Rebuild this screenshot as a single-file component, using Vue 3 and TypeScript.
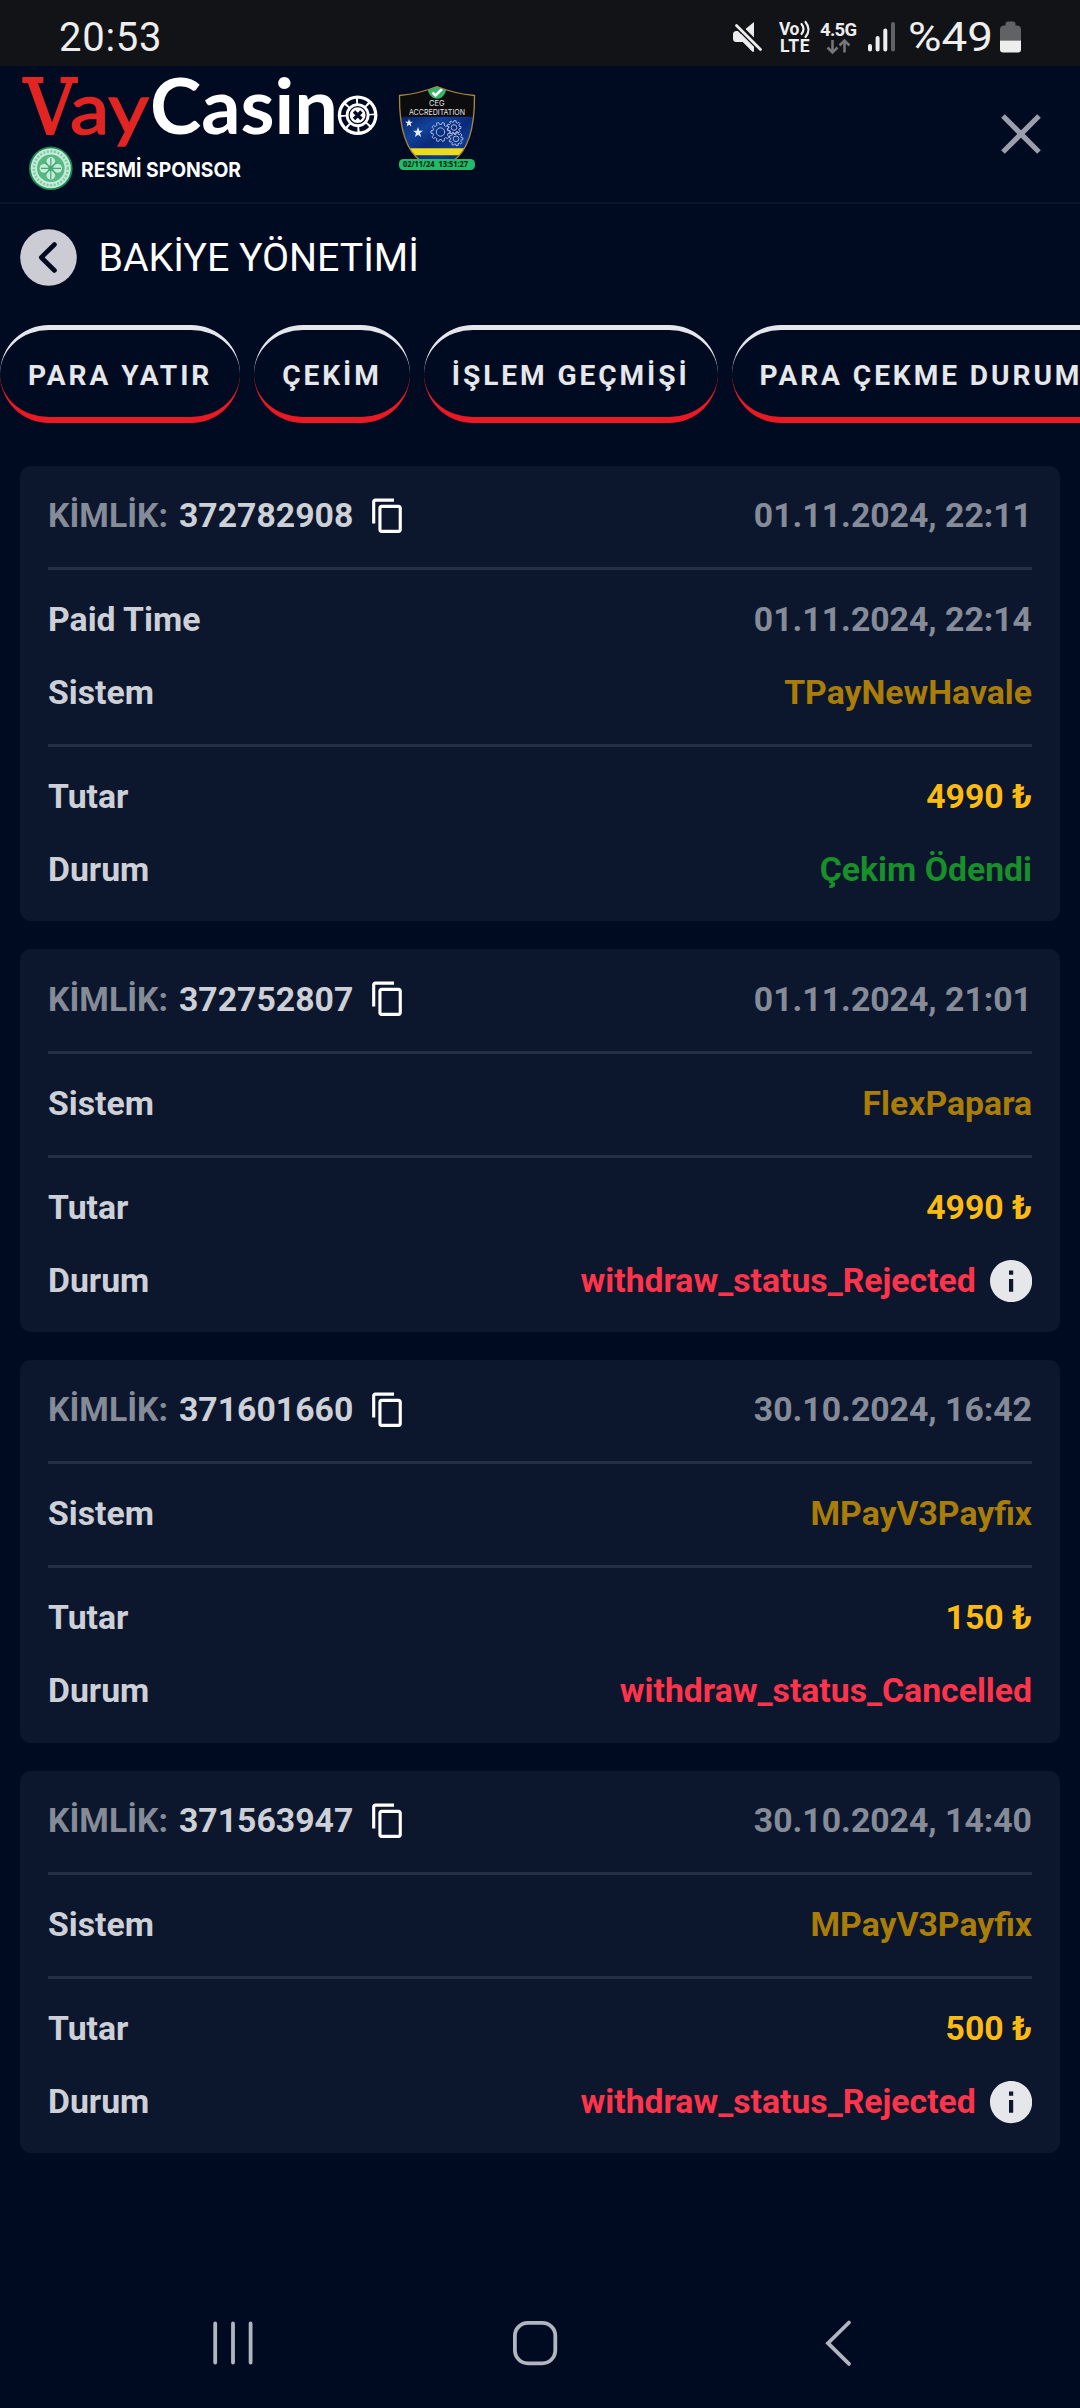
<script setup lang="ts">
type Tone = 'muted' | 'system' | 'amount' | 'paid' | 'failed'

interface Row {
  label: string
  value: string
  tone: Tone
  info?: boolean
}

interface Transaction {
  id: string
  date: string
  details: Row[]
  summary: Row[]
}

const tabs: string[] = ['PARA YATIR', 'ÇEKİM', 'İŞLEM GEÇMİŞİ', 'PARA ÇEKME DURUMU']

const transactions: Transaction[] = [
  {
    id: '372782908',
    date: '01.11.2024, 22:11',
    details: [
      { label: 'Paid Time', value: '01.11.2024, 22:14', tone: 'muted' },
      { label: 'Sistem', value: 'TPayNewHavale', tone: 'system' },
    ],
    summary: [
      { label: 'Tutar', value: '4990 ₺', tone: 'amount' },
      { label: 'Durum', value: 'Çekim Ödendi', tone: 'paid' },
    ],
  },
  {
    id: '372752807',
    date: '01.11.2024, 21:01',
    details: [{ label: 'Sistem', value: 'FlexPapara', tone: 'system' }],
    summary: [
      { label: 'Tutar', value: '4990 ₺', tone: 'amount' },
      { label: 'Durum', value: 'withdraw_status_Rejected', tone: 'failed', info: true },
    ],
  },
  {
    id: '371601660',
    date: '30.10.2024, 16:42',
    details: [{ label: 'Sistem', value: 'MPayV3Payfix', tone: 'system' }],
    summary: [
      { label: 'Tutar', value: '150 ₺', tone: 'amount' },
      { label: 'Durum', value: 'withdraw_status_Cancelled', tone: 'failed' },
    ],
  },
  {
    id: '371563947',
    date: '30.10.2024, 14:40',
    details: [{ label: 'Sistem', value: 'MPayV3Payfix', tone: 'system' }],
    summary: [
      { label: 'Tutar', value: '500 ₺', tone: 'amount' },
      { label: 'Durum', value: 'withdraw_status_Rejected', tone: 'failed', info: true },
    ],
  },
]

// Outline of a cog with flat teeth, centred on (cx, cy)
function cog(cx: number, cy: number, outer: number, inner: number, teeth: number): string {
  const points: string[] = []
  const step = (Math.PI * 2) / teeth
  for (let i = 0; i < teeth; i++) {
    const a = i * step
    const corners: [number, number][] = [[-0.3, inner], [-0.2, outer], [0.2, outer], [0.3, inner]]
    for (const [offset, r] of corners) {
      const t = a + offset * step
      points.push(`${(cx + Math.cos(t) * r).toFixed(2)},${(cy + Math.sin(t) * r).toFixed(2)}`)
    }
  }
  return points.join(' ')
}

const cogs = [
  { points: cog(440.5, 132, 9.6, 7.6, 10), cx: 440.5, cy: 132, r: 4.2 },
  { points: cog(454, 127.5, 7, 5.4, 9), cx: 454, cy: 127.5, r: 2.8 },
  { points: cog(456, 138.8, 7, 5.4, 9), cx: 456, cy: 138.8, r: 2.8 },
]
</script>

<template>
  <div class="screen">
    <div class="status">
      <svg width="1080" height="66" viewBox="0 0 1080 66">
        <text x="59" y="51" font-size="40" textLength="102.5" class="st">20:53</text>
        <g fill="#eeeeef">
          <path d="M733 34.500q0-3.500 3.500-3.500h5.500l12 11v9.500h-1.500l-9.500-9.500h-6.500q-3.500 0-3.500-3.500z" />
          <path d="M754 22v15.500l-8.500-8.500z" />
          <path d="M736.500 25.500l24 24" stroke="#111316" stroke-width="6" />
          <path d="M741 34l13 13v4.500h-1.500l-11-11z" />
          <path d="M736.500 25.500l24 24" stroke="#eeeeef" stroke-width="2.800" stroke-linecap="round" />
        </g>
        <text x="779" y="34.700" font-size="17.500" textLength="20.500" class="st b">Vo</text>
        <path d="M801.500 24q4 5 0 10M805.500 22q6 7.500 0 15" fill="none" stroke="#eeeeef" stroke-width="2.200" stroke-linecap="round" />
        <text x="780" y="52.300" font-size="17.500" textLength="29.500" class="st b">LTE</text>
        <text x="820" y="35.500" font-size="18.500" textLength="37" class="st b">4.5G</text>
        <path d="M832.500 40v12M827.500 47.500l5 5 5-5M844.500 52.500v-12M839.500 45.500l5-5 5 5" fill="none" stroke="#747577" stroke-width="2.600" />
        <g stroke-width="4" stroke-linecap="round">
          <path d="M870 46v3.500M877.600 38v11.500M885.300 30.500v19" stroke="#eeeeef" />
          <path d="M893 24v25.500" stroke="#616264" />
        </g>
        <text x="908" y="51" font-size="40" textLength="85" lengthAdjust="spacingAndGlyphs" class="st">%49</text>
        <path d="M1000 40.500v-11q0-3.500 3.500-4h2v-1.500q0-2.500 2.500-2.500h5q2.500 0 2.500 2.500v1.500h2q3.500.5 3.500 4v11z" fill="#616264" />
        <path d="M1000 40.500h21v9q0 3-3 3h-15q-3 0-3-3z" fill="#eeeeef" />
      </svg>
    </div>

    <header class="header">
      <svg class="brand" width="500" height="136" viewBox="0 66 500 136">
        <text x="24" y="134" textLength="52" lengthAdjust="spacingAndGlyphs" class="vay slab">V</text>
        <text x="70" y="134" textLength="79" lengthAdjust="spacingAndGlyphs" class="vay">ay</text>
        <text x="150" y="134" textLength="188" lengthAdjust="spacingAndGlyphs" class="casin">Casin</text>
        <circle cx="357.600" cy="115.200" r="19.800" fill="#fff" />
        <circle cx="357.600" cy="115.200" r="14.300" fill="none" stroke="#000b22" stroke-width="4.500" stroke-dasharray="9.230 2" />
        <path d="M354 111.500l7.500 7.500M361.500 111.500l-7.500 7.500" stroke="#000b22" stroke-width="3.400" />
        <circle cx="357.600" cy="115.200" r="8.500" fill="none" stroke="#000b22" stroke-width="1.200" />

        <circle cx="50.800" cy="168.300" r="21.800" fill="#1c8a57" />
        <circle cx="50.800" cy="168.300" r="20" fill="#c4ecd6" />
        <circle cx="50.800" cy="168.300" r="17" fill="none" stroke="#7fcaa2" stroke-width="2.500" stroke-dasharray="2 1.600" />
        <circle cx="50.800" cy="168.300" r="13.800" fill="#58b885" />
        <g fill="#c4ecd6">
          <circle cx="50.800" cy="161.500" r="4.400" /><circle cx="57.600" cy="168.300" r="4.400" />
          <circle cx="50.800" cy="175.100" r="4.400" /><circle cx="44" cy="168.300" r="4.400" />
        </g>
        <path d="M50.800 158v21M41 168.300h20M45 162l11.500 12.500M56.500 162L45 174.500" stroke="#45a875" stroke-width="1.200" />
        <text x="81" y="177" textLength="160" lengthAdjust="spacingAndGlyphs" class="sponsor">RESMİ SPONSOR</text>

        <defs>
          <clipPath id="shield"><path d="M437 86.500Q420 93.500 399.500 95.500Q399 146 421 161H453Q475 146 474.500 95.500Q454 93.500 437 86.500z" /></clipPath>
          <linearGradient id="flag" x1="0" y1="0" x2="1" y2="1">
            <stop offset="0" stop-color="#06225f" /><stop offset=".3" stop-color="#12429b" />
            <stop offset=".5" stop-color="#082a78" /><stop offset=".7" stop-color="#0f3a92" />
            <stop offset="1" stop-color="#051a50" />
          </linearGradient>
        </defs>
        <g clip-path="url(#shield)">
          <path d="M398 85h78v32h-78z" fill="#0c0c0e" />
          <path d="M398 116.700h78V162h-78z" fill="url(#flag)" />
          <path d="M398 148.300h78v7h-78z" fill="#eddc1c" />
          <path d="M427.500 86h19q0 8-5 11.500-4.500 2.500-9 0-5-3.500-5-11.500z" fill="#35b568" />
        </g>
        <path d="M432.500 92.500l3 3 6.500-6.500" fill="none" stroke="#fff" stroke-width="2.600" />
        <path d="M421 161Q399 146 399.500 95.500Q420 93.500 437 86.500Q454 93.500 474.500 95.500Q475 146 453 161" fill="none" stroke="#a9853f" stroke-width="1.300" />
        <text x="429" y="105.500" font-size="7.500" textLength="15.500" class="seal">CEG</text>
        <text x="409" y="115" font-size="8" textLength="56" lengthAdjust="spacingAndGlyphs" class="seal">ACCREDITATION</text>
        <path d="M409 119l1 2.800h2.800l-2.200 1.800.8 2.900-2.400-1.700-2.400 1.700.8-2.900-2.200-1.800h2.800zM418 127l1.300 3.700h3.700l-3 2.400 1.100 3.900-3.100-2.300-3.100 2.300 1.100-3.900-3-2.400h3.700z" fill="#e8edf8" />
        <g fill="none" stroke="#b9c6e4" stroke-width=".9">
          <template v-for="c in cogs" :key="c.points">
            <polygon :points="c.points" /><circle :cx="c.cx" :cy="c.cy" :r="c.r" />
          </template>
        </g>
        <rect x="399" y="159" width="76" height="11" rx="4.500" fill="#24bb68" />
        <text x="403" y="167.400" textLength="31.500" lengthAdjust="spacingAndGlyphs" class="stamp">02/11/24</text>
        <text x="438.500" y="167.400" textLength="29.500" lengthAdjust="spacingAndGlyphs" class="stamp">13:51:27</text>
      </svg>
      <svg class="close" width="40" height="40" viewBox="0 0 40 40"><path d="M2 2l36 36M38 2L2 38" stroke="#9b9fab" stroke-width="5.200" /></svg>
    </header>

    <div class="title">
      <svg width="57" height="57" viewBox="0 0 57 57">
        <circle cx="28.500" cy="28.500" r="28.300" fill="#cccdd4" />
        <path d="M34.500 15.500L21.300 28.500l13.200 13" fill="none" stroke="#000b22" stroke-width="4.600" stroke-linecap="round" stroke-linejoin="round" />
      </svg>
      <h1>BAKİYE YÖNETİMİ</h1>
    </div>

    <nav class="tabs">
      <div v-for="tab in tabs" :key="tab" class="tab">{{ tab }}</div>
    </nav>

    <main class="list">
      <article v-for="t in transactions" :key="t.id" class="card">
        <section>
          <div class="row">
            <div class="ident">
              <span class="key">KİMLİK:</span><span class="id">{{ t.id }}</span>
              <svg width="37.500" height="37.500" viewBox="0 0 24 24"><path fill="#fff" d="M16 1H4c-1.100 0-2 .9-2 2v14h2V3h12V1zm3 4H8c-1.100 0-2 .9-2 2v14c0 1.100.9 2 2 2h11c1.100 0 2-.9 2-2V7c0-1.100-.9-2-2-2zm0 16H8V7h11v14z" /></svg>
            </div>
            <span class="muted">{{ t.date }}</span>
          </div>
        </section>
        <div class="rule" />
        <section>
          <div v-for="r in t.details" :key="r.label" class="row">
            <span>{{ r.label }}</span><span :class="r.tone">{{ r.value }}</span>
          </div>
        </section>
        <div class="rule" />
        <section>
          <div v-for="r in t.summary" :key="r.label" class="row">
            <span>{{ r.label }}</span>
            <span class="value" :class="r.tone">{{ r.value }}
              <svg v-if="r.info" class="info" width="42.200" height="42.200" viewBox="2 2 20 20"><path fill="#e6e7eb" d="M12 2C6.480 2 2 6.480 2 12s4.480 10 10 10 10-4.480 10-10S17.520 2 12 2zm1 15h-2v-6h2v6zm0-8h-2V7h2v2z" /></svg>
            </span>
          </div>
        </section>
      </article>
    </main>

    <footer class="navbar">
      <svg width="1080" height="130" viewBox="0 2278 1080 130" fill="none" stroke="#b1b5bf" stroke-width="3.800" stroke-linecap="round">
        <path d="M215.200 2323.500v39M233 2323.500v39M250.600 2323.500v39" />
        <rect x="514.900" y="2322.900" width="40.400" height="40.400" rx="13" />
        <path d="M849 2322.500l-21 20.700 21 20.700" />
      </svg>
    </footer>
  </div>
</template>

<style>
body {
  background: #000b22;
}
</style>

<style scoped>
.screen {
  width: 1080px;
  height: 2408px;
  overflow: hidden;
  display: flex;
  flex-direction: column;
  background: #000b22;
  color: #cdd0d6;
  font-family: Roboto, "Liberation Sans", sans-serif;
}

svg {
  display: block;
  flex: none;
}

.status {
  height: 66px;
  background: #111316;
}

.st {
  fill: #eeeeef;
  font-family: Roboto, sans-serif;
}

.b {
  font-weight: 700;
}

.header {
  height: 136px;
  display: flex;
  justify-content: space-between;
  align-items: center;
  padding-right: 39px;
  border-bottom: 2px solid #0b152c;
}

.brand {
  overflow: visible;
}

.vay {
  font: 400 72px Lato, sans-serif;
  fill: #e22522;
  stroke: #e22522;
  stroke-width: 1.5px;
}

.slab {
  font: 400 76px "DejaVu Serif", serif;
  stroke-width: 2px;
}

.casin {
  font: 700 76px Lato, sans-serif;
  fill: #fff;
}

.sponsor {
  font: 700 20.500px Inter, sans-serif;
  fill: #fff;
}

.seal {
  font-family: Inter, sans-serif;
  fill: #e5e5e5;
}

.stamp {
  font: 700 8px "Open Sans", sans-serif;
  fill: #06220f;
}

.title {
  display: flex;
  align-items: center;
  gap: 22px;
  height: 57px;
  padding-left: 19.500px;
  margin-top: 25px;
}

h1 {
  margin: 0;
  font-size: 39.375px;
  font-weight: 400;
  line-height: 57px;
  letter-spacing: -0.050px;
  color: #fff;
}

.tabs {
  display: flex;
  gap: 14px;
  margin-top: 39px;
}

.tab {
  flex: none;
  box-sizing: border-box;
  height: 98px;
  padding: 0 28px;
  border: 0 solid;
  border-top: 5px solid #e6e7ed;
  border-bottom: 6px solid #eb1923;
  border-radius: 49px;
  font-size: 28.125px;
  line-height: 91px;
  font-weight: 700;
  letter-spacing: 2.920px;
  white-space: nowrap;
  color: #e6e7ea;
}

.list {
  display: flex;
  flex-direction: column;
  gap: 28.125px;
  padding: 0 20px;
  margin-top: 42.750px;
}

.card {
  padding: 0 28px;
  border-radius: 11px;
  background: #0c172e;
  font-size: 33.750px;
  font-weight: 700;
  line-height: 43px;
}

section {
  display: flex;
  flex-direction: column;
  gap: 28.125px;
  padding: 28.125px 0;
}

.row {
  height: 45px;
  display: flex;
  justify-content: space-between;
  align-items: flex-start;
  white-space: nowrap;
}

.ident,
.value {
  display: flex;
  align-items: center;
}

.value {
  gap: 14px;
}

.info {
  transform: translateY(1px);
}

.id {
  margin: 0 16px 0 11px;
}

.rule {
  height: 2.812px;
  background: #252f44;
}

.key,
.muted {
  color: #868b98;
}

.system {
  color: #a97d08;
}

.amount {
  color: #fdbb12;
}

.paid {
  color: #188f29;
}

.failed {
  color: #ff344b;
}

.navbar {
  margin-top: auto;
}
</style>
